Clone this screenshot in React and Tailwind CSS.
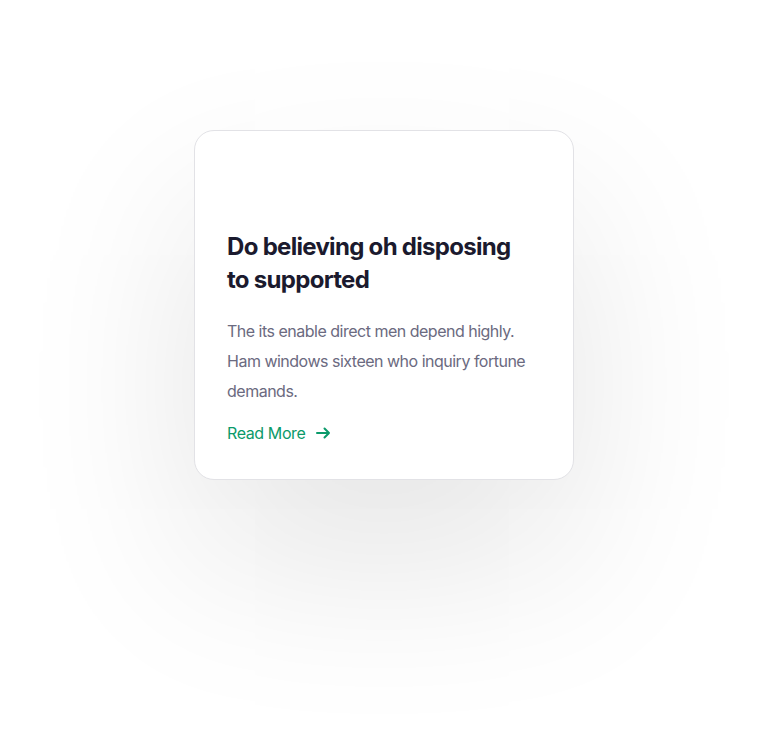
export default function App() {
  return (
    <div className="min-h-[738px] w-full bg-white pt-[130px]" style={{ fontFamily: 'Inter, "Noto Sans", sans-serif' }}>
      <div className="mx-auto w-[380px] rounded-[20px] border border-[#e2e2e6] bg-white px-8 pt-[99px] pb-[31px] shadow-[0_80px_180px_rgba(0,0,0,0.11)]">
        <h3 className="max-w-[292px] text-[24px] font-bold leading-[33px] tracking-[-0.7px] text-[#1b1a2e]">
          Do believing oh disposing to supported
        </h3>
        <p className="mt-[20px] text-[16px] leading-[30px] tracking-[-0.5px] text-[#6b6a80]">
          The its enable direct men depend highly. Ham windows sixteen who inquiry fortune demands.
        </p>
        <a href="#" className="mt-[12px] flex items-center gap-[11px] text-[16px] leading-[30px] tracking-[-0.4px] text-[#0b9a6a]">
          Read More
          <svg width="15" height="12" viewBox="0 0 15 12" fill="none" stroke="currentColor" strokeWidth="2" strokeLinecap="round" strokeLinejoin="round">
            <path d="M1 6h12M8.5 1.5 13 6l-4.5 4.5" />
          </svg>
        </a>
      </div>
    </div>
  );
}
